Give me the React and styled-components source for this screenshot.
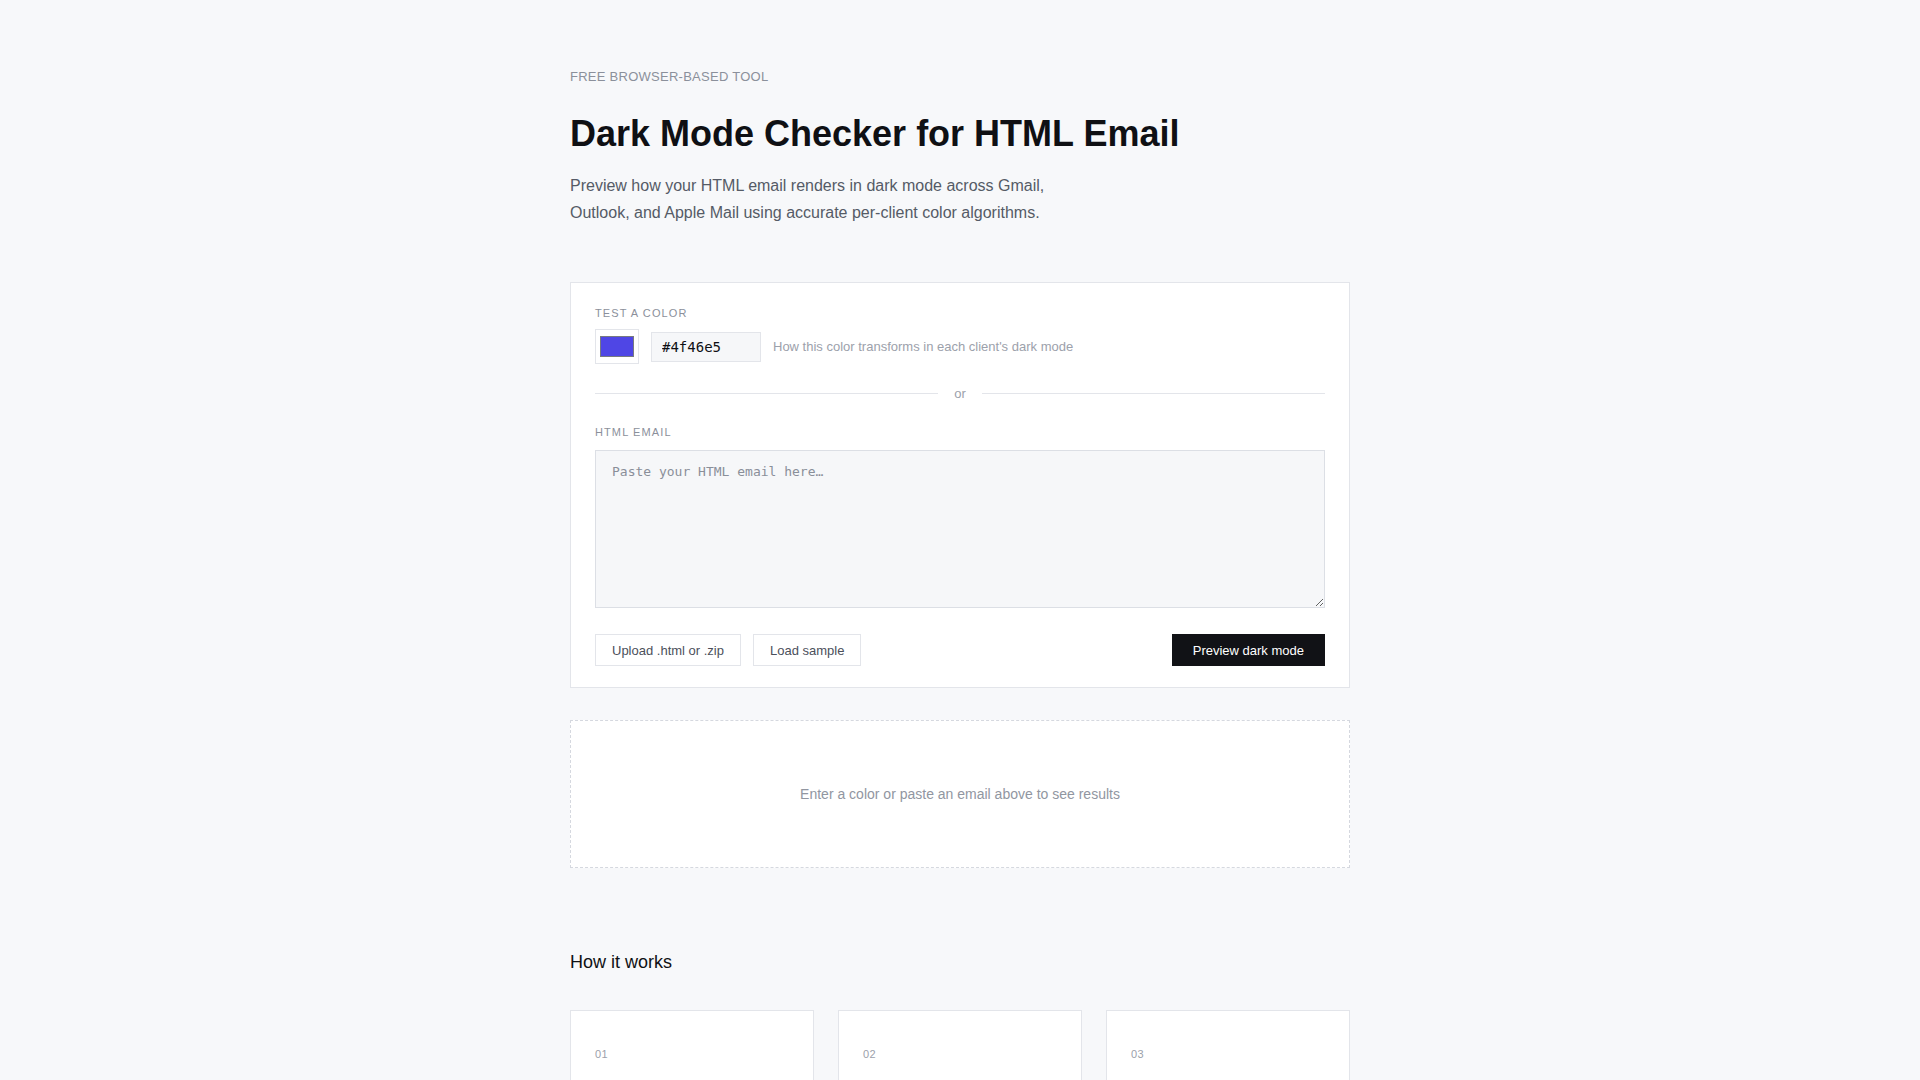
import React, { useState } from 'react';
import styled, { createGlobalStyle } from 'styled-components';

const COLORS = {
  PAGE: '#f7f8fa',
  SURFACE: '#ffffff',
  BORDER: '#e3e5ea',
  INK: '#0f1014',
  BODY: '#555b66',
  MUTED: '#8b909b',
  FAINT: '#9ca1ab',
  FIELD: '#f6f7f9',
};

const SANS = `"Liberation Sans", Arial, Helvetica, sans-serif`;
const MONO = `"DejaVu Sans Mono", "Liberation Mono", monospace`;

const GlobalStyle = createGlobalStyle`
  * {
    box-sizing: border-box;
  }

  html, body {
    margin: 0;
    padding: 0;
    background: ${COLORS.PAGE};
    font-family: ${SANS};
    color: ${COLORS.INK};
  }
`;

const Page = styled.main`
  width: 780px;
  margin: 0 auto;
  padding: 69px 0 80px;
`;

const Eyebrow = styled.p`
  margin: 0 0 29px;
  font-size: 13px;
  line-height: 15px;
  letter-spacing: 0.02em;
  text-transform: uppercase;
  color: ${COLORS.MUTED};
`;

const Title = styled.h1`
  margin: 0;
  font-size: 36px;
  line-height: 1.15;
  font-weight: 700;
  color: ${COLORS.INK};
`;

const Lead = styled.p`
  margin: 19px 0 56px;
  max-width: 520px;
  font-size: 16px;
  line-height: 1.65;
  color: ${COLORS.BODY};
`;

const Panel = styled.section`
  background: ${COLORS.SURFACE};
  border: 1px solid ${COLORS.BORDER};
  padding: 24px 24px 21px;
`;

const Label = styled.div`
  margin-bottom: ${(p) => p.$gap}px;
  font-size: 11px;
  line-height: 13px;
  letter-spacing: 0.1em;
  text-transform: uppercase;
  color: ${COLORS.MUTED};
`;

const ColorRow = styled.div`
  display: flex;
  align-items: center;
  gap: 12px;
`;

const Swatch = styled.input`
  width: 44px;
  height: 35px;
  padding: 6px 4px;
  margin: 0;
  border: 1px solid ${COLORS.BORDER};
  background: ${COLORS.SURFACE};
  cursor: pointer;
  -webkit-appearance: none;
  appearance: none;

  &::-webkit-color-swatch-wrapper {
    padding: 0;
  }

  &::-webkit-color-swatch {
    border: 1px solid #777a80;
    border-radius: 0;
  }
`;

const HexInput = styled.input`
  width: 110px;
  height: 30px;
  padding: 0 10px;
  border: 1px solid ${COLORS.BORDER};
  background: ${COLORS.FIELD};
  font-family: ${MONO};
  font-size: 14px;
  color: ${COLORS.INK};
  outline: none;
`;

const Hint = styled.span`
  font-size: 13px;
  color: ${COLORS.FAINT};
`;

const Divider = styled.div`
  display: flex;
  align-items: center;
  gap: 16px;
  margin: 22px 0 25px;
  font-size: 13px;
  line-height: 15px;
  color: ${COLORS.FAINT};

  &::before,
  &::after {
    content: '';
    flex: 1;
    height: 1px;
    background: ${COLORS.BORDER};
  }
`;

const EmailInput = styled.textarea`
  display: block;
  width: 100%;
  height: 158px;
  margin: 0;
  padding: 11px 16px;
  border: 1px solid #dcdfe5;
  background: ${COLORS.FIELD};
  font-family: ${MONO};
  font-size: 13px;
  line-height: 1.5;
  color: ${COLORS.INK};
  resize: vertical;
  outline: none;

  &::placeholder {
    color: #8a8f99;
  }
`;

const Actions = styled.div`
  display: flex;
  align-items: center;
  gap: 12px;
  margin-top: 26px;
`;

const Spacer = styled.div`
  flex: 1;
`;

const Button = styled.button`
  height: 32px;
  padding: 0 ${(p) => (p.$primary ? 20 : 16)}px;
  border: 1px solid ${(p) => (p.$primary ? '#111216' : COLORS.BORDER)};
  background: ${(p) => (p.$primary ? '#111216' : COLORS.SURFACE)};
  color: ${(p) => (p.$primary ? '#ffffff' : '#4b505b')};
  font-family: ${SANS};
  font-size: 13px;
  cursor: pointer;
`;

const Results = styled.div`
  margin-top: 32px;
  padding: 64px 24px;
  border: 1px dashed #d5d8df;
  background: ${COLORS.SURFACE};
  text-align: center;
  font-size: 14px;
  line-height: 18px;
  color: #9196a1;
`;

const SectionTitle = styled.h2`
  margin: 83px 0 36px;
  font-size: 18px;
  line-height: 23px;
  font-weight: 400;
  color: ${COLORS.INK};
`;

const Steps = styled.div`
  display: grid;
  grid-template-columns: repeat(3, 1fr);
  gap: 24px;
`;

const Step = styled.div`
  background: ${COLORS.SURFACE};
  border: 1px solid ${COLORS.BORDER};
  padding: 37px 24px 28px;
`;

const StepNumber = styled.div`
  margin-bottom: 40px;
  font-size: 11px;
  line-height: 13px;
  letter-spacing: 0.04em;
  color: ${COLORS.FAINT};
`;

const StepTitle = styled.h3`
  margin: 0 0 8px;
  font-size: 15px;
  font-weight: 400;
  color: ${COLORS.INK};
`;

const StepText = styled.p`
  margin: 0;
  font-size: 13px;
  line-height: 1.6;
  color: ${COLORS.BODY};
`;

const STEPS = [
  { n: '01', title: 'Add your email', text: 'Paste HTML, upload a file, or test a single brand color.' },
  { n: '02', title: 'We apply each algorithm', text: 'Colors are inverted the way Gmail, Outlook and Apple Mail do it.' },
  { n: '03', title: 'Review and fix', text: 'Spot unreadable text and vanishing logos before you send.' },
];

function App() {
  const [color, setColor] = useState('#4f46e5');
  const [html, setHtml] = useState('');

  return (
    <>
      <GlobalStyle />
      <Page>
        <Eyebrow>Free browser-based tool</Eyebrow>
        <Title>Dark Mode Checker for HTML Email</Title>
        <Lead>
          Preview how your HTML email renders in dark mode across Gmail, Outlook, and Apple Mail using accurate
          per-client color algorithms.
        </Lead>

        <Panel>
          <Label $gap={9}>Test a color</Label>
          <ColorRow>
            <Swatch type="color" value={color} onChange={(e) => setColor(e.target.value)} />
            <HexInput value={color} onChange={(e) => setColor(e.target.value)} spellCheck={false} />
            <Hint>How this color transforms in each client's dark mode</Hint>
          </ColorRow>

          <Divider>or</Divider>

          <Label $gap={11}>HTML email</Label>
          <EmailInput
            value={html}
            onChange={(e) => setHtml(e.target.value)}
            placeholder="Paste your HTML email here…"
            spellCheck={false}
          />

          <Actions>
            <Button>Upload .html or .zip</Button>
            <Button>Load sample</Button>
            <Spacer />
            <Button $primary>Preview dark mode</Button>
          </Actions>
        </Panel>

        <Results>Enter a color or paste an email above to see results</Results>

        <SectionTitle>How it works</SectionTitle>
        <Steps>
          {STEPS.map((s) => (
            <Step key={s.n}>
              <StepNumber>{s.n}</StepNumber>
              <StepTitle>{s.title}</StepTitle>
              <StepText>{s.text}</StepText>
            </Step>
          ))}
        </Steps>
      </Page>
    </>
  );
}

export default App;
